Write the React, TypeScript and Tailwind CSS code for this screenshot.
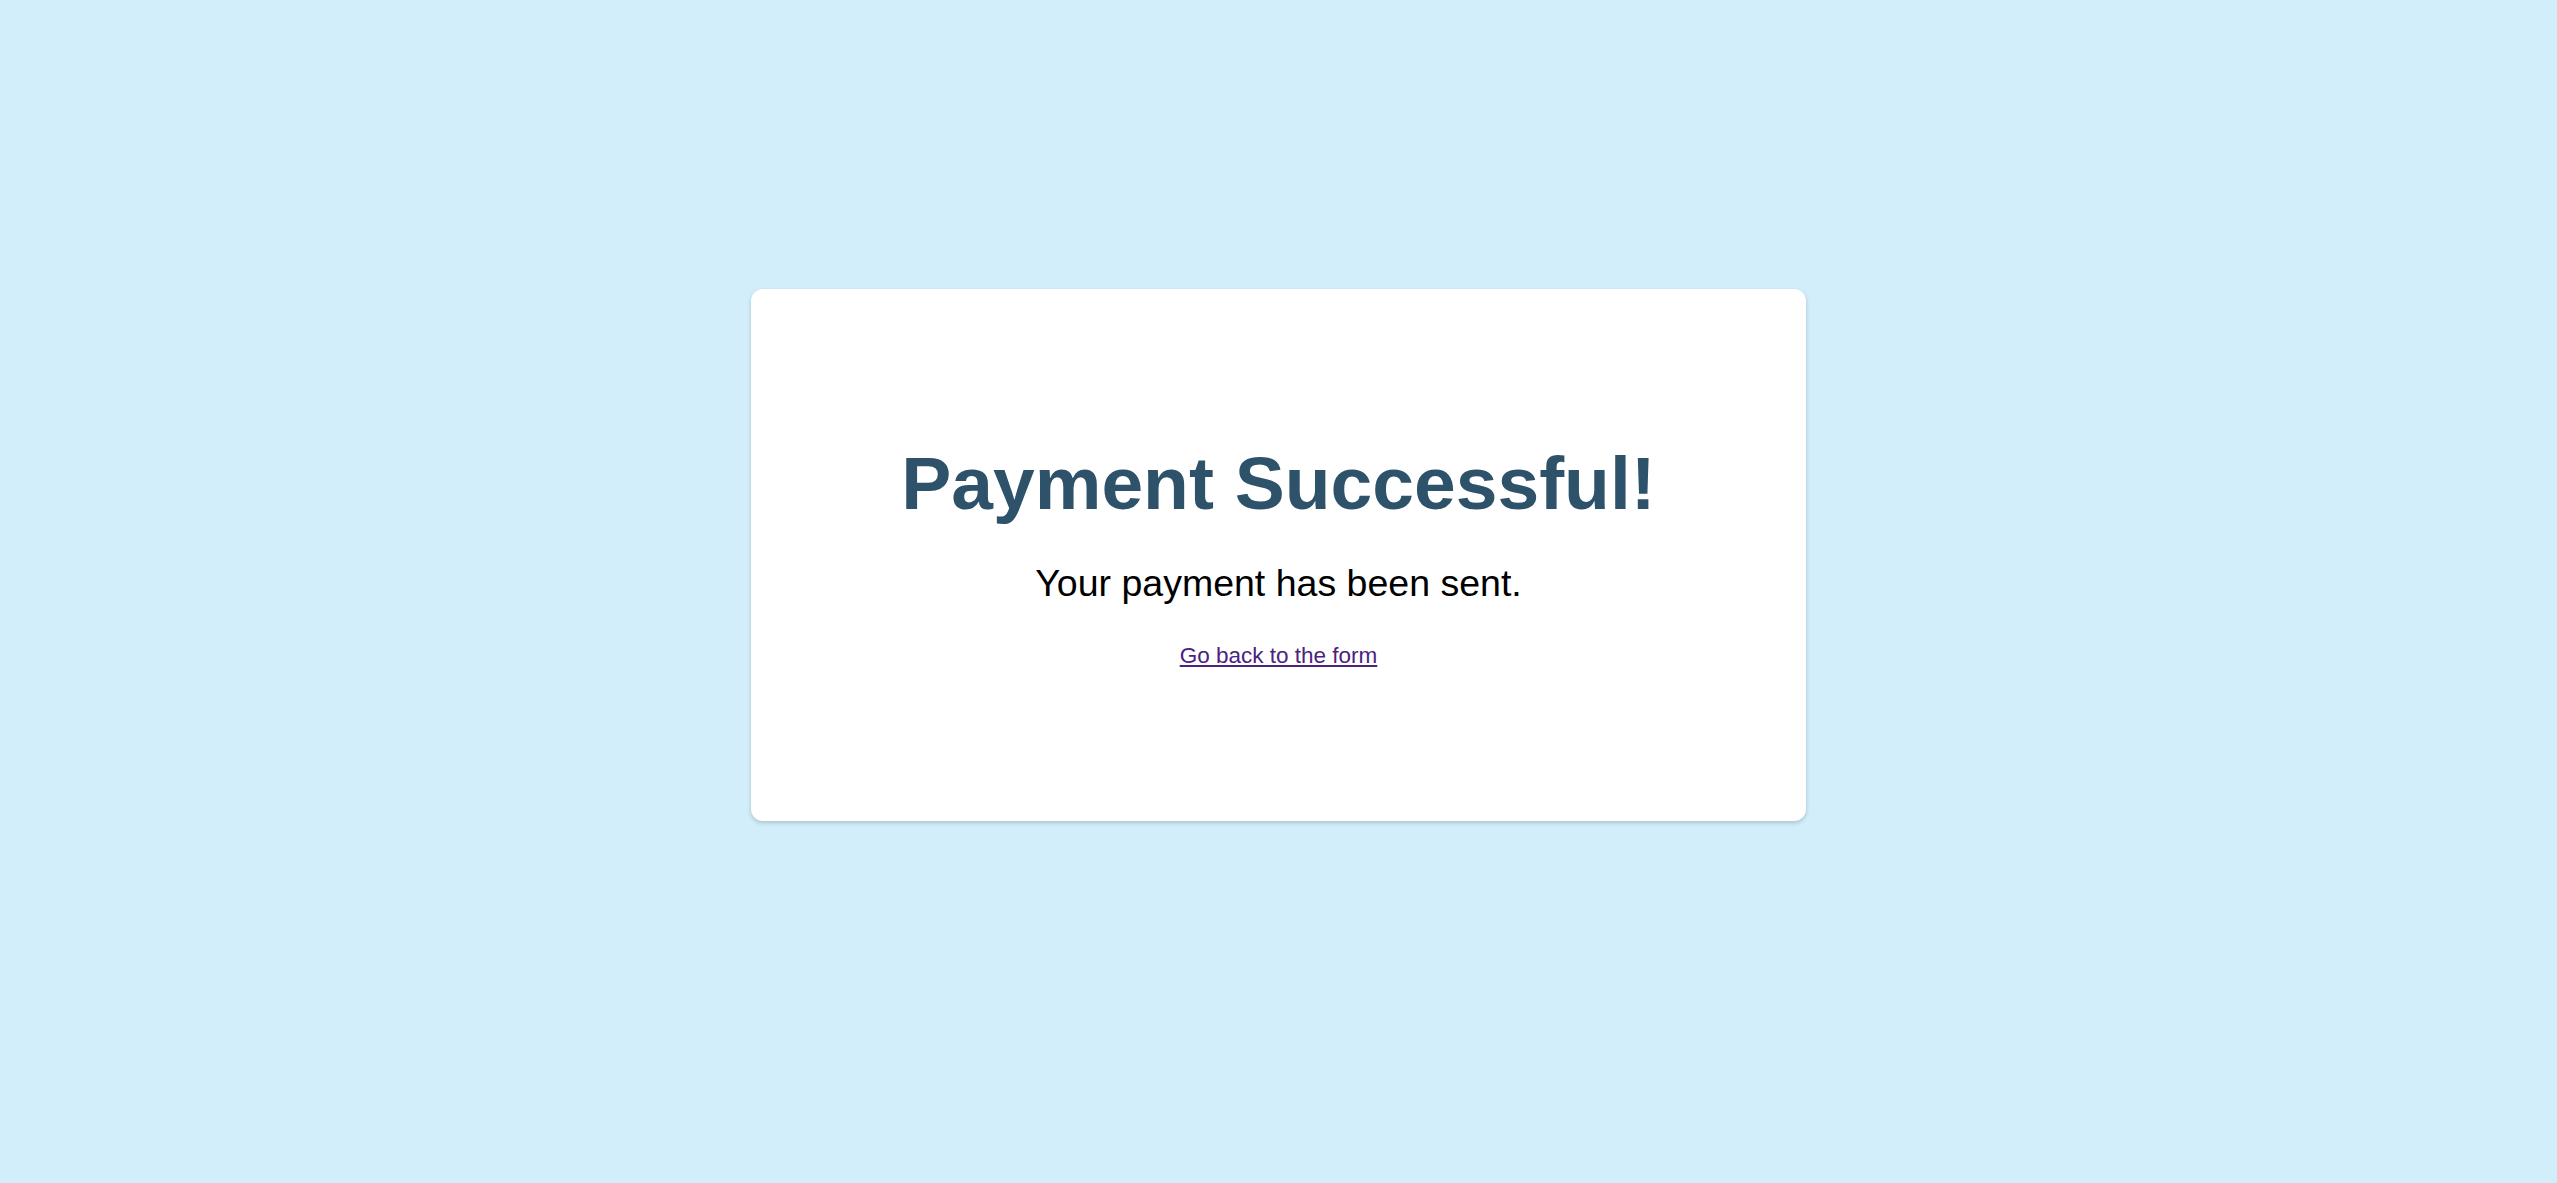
export default function App() {
  return (
    <main
      className="min-h-screen w-full bg-[#d1eefa] pt-[289px]"
      style={{ fontFamily: '"Liberation Sans", Arial, sans-serif' }}
    >
      <div className="mx-auto flex h-[532px] w-[1055px] flex-col items-center rounded-[12px] bg-white pt-[151px] shadow-[0_2px_4px_rgba(0,0,0,0.18)]">
        <h1 className="text-[75px] font-bold leading-[86px] text-[#2d5269]">
          Payment Successful!
        </h1>
        <p className="mt-[36px] text-[37.5px] leading-[42px] text-black">
          Your payment has been sent.
        </p>
        <a
          href="#"
          className="mt-[39px] text-[22.5px] leading-[26px] text-[#4b237f] underline"
        >
          Go back to the form
        </a>
      </div>
    </main>
  );
}
